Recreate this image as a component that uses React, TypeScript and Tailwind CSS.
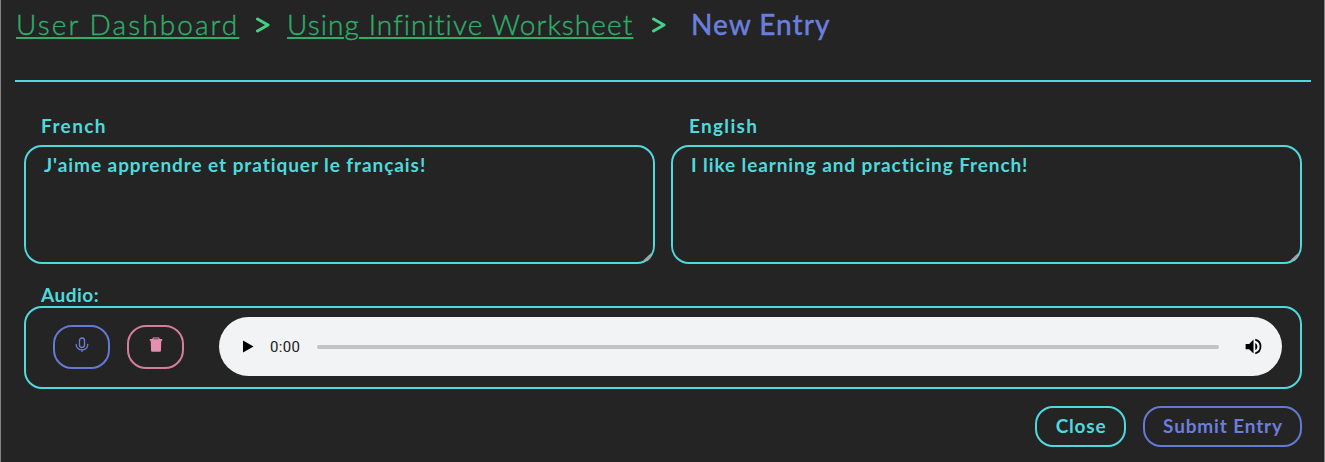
import type { ReactNode } from "react";

function Entry({ label, value, labelClass, textClass }: { label: string; value: string; labelClass: string; textClass: string }) {
  return (
    <label className="relative block flex-1">
      <span className={`block h-[29px] leading-[20px] ${labelClass}`}>{label}</span>
      <textarea
        defaultValue={value}
        spellCheck={false}
        className={`block h-[119px] w-full resize-none rounded-[18px] border-2 border-[#50d9dd] bg-transparent px-[18px] pt-[5px] leading-[26px] outline-none ${textClass}`}
      />
      <svg className="absolute right-[3px] bottom-[2px] h-[9px] w-[9px]" viewBox="0 0 10 10" fill="none">
        <path d="M1 8.5 9 1M4.5 8.5 8.5 4.5" stroke="#a5a19f" strokeWidth="1.5" />
      </svg>
    </label>
  );
}

function IconButton({ name, className, children }: { name: string; className: string; children: ReactNode }) {
  return (
    <button aria-label={name} className={`flex h-[44px] w-[57px] items-start justify-center rounded-[19px] border-2 pt-[10px] ${className}`}>
      {children}
    </button>
  );
}

export default function App() {
  return (
    <main className="h-[462px] overflow-hidden border-x border-[#858585] bg-[#242424] pr-[13px] pl-[14px] font-['Lato',sans-serif] text-[19px] font-bold text-[#50d9dd]">
      <nav className="flex h-[80px] pt-[4px] pl-px text-[28px] leading-[40px] whitespace-nowrap">
        <a className="w-[240px] font-light text-[#30ad69] [-webkit-text-stroke:0.4px]"><span className="tracking-[2.1px] underline decoration-2 underline-offset-[2px]">User Dashboard</span></a>
        <svg className="mt-[13px] mr-[17px] h-[16px] w-[14px]" viewBox="0 0 14 16" fill="none" aria-hidden="true">
          <path d="M1.5 2 12 8 1.5 14" stroke="#45d184" strokeWidth="3" strokeLinecap="round" strokeLinejoin="round" />
        </svg>
        <a className="w-[365px] font-light text-[#30ad69] [-webkit-text-stroke:0.4px]"><span className="tracking-[1.1px] underline decoration-2 underline-offset-[2px]">Using Infinitive Worksheet</span></a>
        <svg className="mt-[13px] mr-[25px] h-[16px] w-[14px]" viewBox="0 0 14 16" fill="none" aria-hidden="true">
          <path d="M1.5 2 12 8 1.5 14" stroke="#45d184" strokeWidth="3" strokeLinecap="round" strokeLinejoin="round" />
        </svg>
        <span className="font-medium tracking-[1px] text-[#6b7edc] [-webkit-text-stroke:0.3px]">New Entry</span>
      </nav>
      <hr className="border-t-2 border-[#50d9dd]" />

      <div className="mt-[34px] flex gap-[16px] px-[9px]">
        <Entry label="French" value="J'aime apprendre et pratiquer le français!" labelClass="pl-[17px] tracking-[1.4px]" textClass="tracking-[0.93px]" />
        <Entry label="English" value="I like learning and practicing French!" labelClass="pl-[18px] tracking-[1.3px]" textClass="tracking-[0.9px]" />
      </div>

      <section className="mt-[20px] px-[9px]">
        <h2 className="h-[22px] pl-[17px] leading-[22px] tracking-[0.5px]">Audio:</h2>
        <div className="flex h-[83px] items-start rounded-[18px] border-2 border-[#50d9dd] pt-[9px] pr-[18px] pl-[27px]">
          <div className="flex gap-[17px] pt-[8px]">
            <IconButton name="Record" className="border-[#6479d5] text-[#6b7edc]">
              <svg width="14" height="16" viewBox="0 0 14 16" fill="none" stroke="currentColor" strokeWidth="1.3" strokeLinecap="round">
                <rect x="4.5" y="1" width="5" height="9.5" rx="2.5" />
                <path d="M1.3 7.5v.7a5.7 4.7 0 0 0 11.4 0v-.7M7 13v1.5" />
              </svg>
            </IconButton>
            <IconButton name="Delete" className="border-[#d47e9d] text-[#e78fb0]">
              <svg width="14" height="16" viewBox="0 0 14 16" fill="currentColor">
                <path fillRule="evenodd" d="M3.5 2V1.5c0-.6.4-1 1-1h5c.6 0 1 .4 1 1V2H13.2v1.7h-.9l-.4 10.3c0 .5-.4.8-.9.8H3c-.5 0-.9-.3-.9-.8L1.7 3.7H.8V2ZM4.5 2.2h5v-.8h-5Z" />
              </svg>
            </IconButton>
          </div>
          <div className="ml-[35px] flex h-[59px] flex-1 items-center rounded-full bg-[#f1f3f4] pr-[18px] pl-[24px] text-black">
            <svg width="11" height="13" viewBox="0 0 11 13"><path d="M0 .5v12l10.5-6Z" fill="currentColor" /></svg>
            <span className="ml-[16px] w-[47px] font-['Roboto',sans-serif] text-[15px] leading-[20px] font-normal tracking-[0.3px] text-[#202020]">0:00</span>
            <div className="h-[4px] flex-1 rounded-full bg-[#c2c3c4]" />
            <svg className="ml-[24px]" width="21" height="21" viewBox="0 0 24 24" fill="currentColor">
              <path d="M3 9v6h4l5 5V4L7 9Zm13.5 3A4.5 4.5 0 0 0 14 7.97v8.05A4.5 4.5 0 0 0 16.5 12ZM14 3.23v2.06a7 7 0 0 1 0 13.42v2.06a9 9 0 0 0 0-17.54Z" />
            </svg>
          </div>
        </div>
        <div className="mt-[17px] flex justify-end gap-[17px]">
          <button className="h-[41px] w-[91px] rounded-[18px] border-2 border-[#50d9dd] pb-px pl-px tracking-[0.8px]">Close</button>
          <button className="h-[41px] w-[159px] rounded-[18px] border-2 border-[#6479d5] pb-px pl-px tracking-[0.85px] text-[#6b7edc]">Submit Entry</button>
        </div>
      </section>
    </main>
  );
}
